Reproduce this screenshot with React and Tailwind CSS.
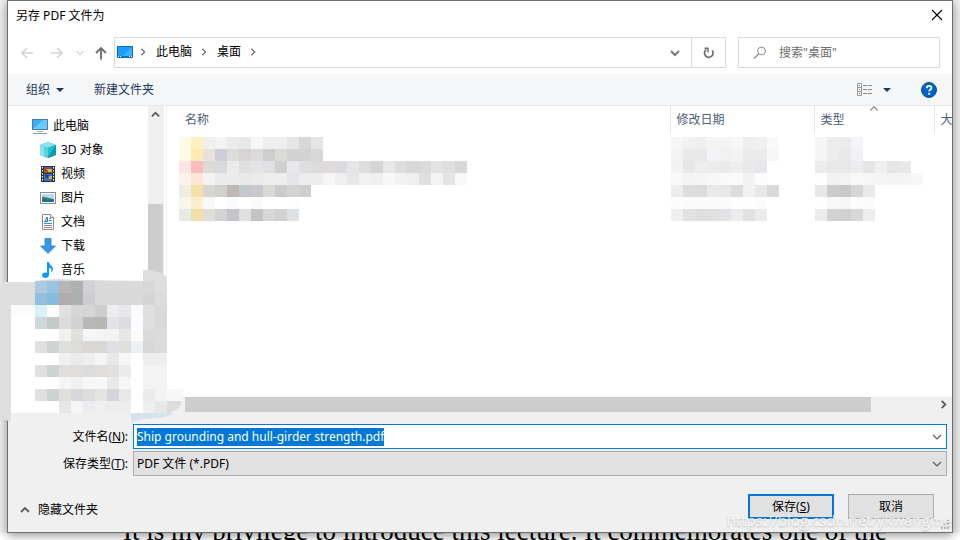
import { useEffect, useRef, useState } from "react";

const NAME_CELLS = [
  "fffae8 fff0c0 f0f0f0 f3f3f3 ecebea e8e8e8 f6f6f5 efefef efefef e8e6e4 d5d7d9 e5e5e5",
  "fffae8 fdebb2 e8e0dc cdcdd6 dcdcdd d8d4d6 dadadb cecdd0 dadad7 d2d2d0 d3d3d3 d7d8da",
  "ffe5e5 fabcba e0d8d6 d6dadf ebebec e0e0e1 e4e4e6 e0e0e2 d0d0d0 e8e9ec dfdfe0 dadcdd e0dadc dcdadf e6e6e6 dddddd d4d6d5 e9e7e8 dddddd d8d8da dadcdb e3e3e3 dfdfdf d7d9d8",
  "fff1ec fde5d8 f4f3f4 eaebeb ebebeb e7eae9 ebebeb eeeeee eeeeee e3e5e8 ededed ededed f7f4f5 efeff1 e7e7e7 f1f1f1 efefef f7f7f7 f1f3f2 f0eef0 dfe1e0 f3f3f3 e4e4e4 f7f8f7",
  "ecede4 f5e2a6 d7d6d5 d0d1cc bfb8b7 c4c7cc cac8cc d8d9d6 cbcbcd d3d3d1 d0ced1",
  "f8f7ea faeecb f8f8fa fffffd fbfaff - fafafa - - fcfdfd",
  "e7eae7 f0dfa8 e1ddd8 d3d3d3 c5c4c9 e0e0df c5c3c4 d7d7d7 d3d0d1 dee1e4",
];

const DATE_CELLS = [
  "f6f6f6 f0f2f2 efefef f3f3f3 f3f3f3 f6f6f6 eeeeee f0f0f0 f8faf9",
  "f3f3f3 e9e9e9 eae9e8 f3f4f8 f1f1f1 f3f3f3 ebebeb eaeaea f7f7f7",
  "f2f2f2 e7e7e5 ededed ececec e8ebe9 eeeeec e9e9ea e6e7ea",
  "f8f8f8 f4f4f4 f5f5f5 f7f7f7 f7faf9 fafafa f2f2f2 fcfcfc",
  "eeebec dddddb dbdbda e8eae9 e6e6e6 dcdcdc f1f1ef e7e7e7 d9d9d9",
  "fcfcfc fafafa fafafa fafafa fafafa fdfdfd fdfdfd fbfbfb",
  "efefef e2e2e3 dfdfdd e0e0e1 e2e3e6 eeeceb dfe1e3 ebebeb",
];

const TYPE_CELLS = [
  "f8f6f5 ebecec ecebea f4f5f8",
  "f5f5f5 ebecec e8e8e6 f1f2f5",
  "eeeceb e7e8e7 e8e8e7 ebecef e5e5e5 efefef e6e6e6 e8e8e8",
  "fdfdfd f2f2f2 f3f3f3 f7f9f8 f6f6f5 f5f5f5 f3f4f4 f4f4f4 f7f7f7",
  "eae8e6 cccccc c8c8c8 d6d6d8 e8e9eb",
  "fefefe f9f9f9 f7f7f7 fcfcfc fafcfb",
  "edebe9 d1d2d2 d0d0cf d8d8da ecedef",
];

const TREE_CELLS = [
  "aacbe2 9ac5e2 b8b5b3 b0b0b0 d0d1d4 dadada dadada dadada dadada d8d8d8",
  "93bfdd 88bcdd b0acaa adb0ae cdced2 d9d9d9 d9d9d9 d9d9d9 d9d9d9 d4d4d4 dcdcdc",
  "daf1f9 fbfcfb e0e0de d4d7d6 d5d5d3 cdcdcf ededed e6e8eb fafbfc dfdfdf d9d9d9",
  "cedada c3c9c7 dcdcda d2d2d2 b8b8b8 b8b7b6 e2e3e6 dfdce0 fcfdff dfdfdf d9d9d9",
  "ffffff ffffff f1eff0 e0e0dd f5f7f6 f3f3f3 f3f3f3 e8e7e7 f9fbfa dadada dbdbdb",
  "dfe1e0 cfd3d1 dfdfdd dddcda d9d8d7 d8d7d5 dfe1e4 e0dfdd eef1f4 d7d7d7 dbdbdb",
  "ffffff ffffff f3eff0 ebeaeb edeef0 f5f5f6 e8e8e6 f6f6f6 ffffff ededed eeeeee",
  "dfe1e0 ced2d0 e0dedc dfdedb dcdcdc dfdedd e2e0de ebebee ffffff f3f3f3 f3f3f3",
  "ffffff ffffff f5f3f4 f0f0f1 f7f7f8 f8f8f8 e9e9e8 f6f6f6 ffffff f3f3f3 f3f3f3",
  "dfe1e0 ced2d0 e0dfdc d8d7da dddde0 e3e3e0 d6d4da e8e8e8 ffffff ebebeb f3f3f3",
  "ffffff ffffff e7e6e4 f5f5f7 ebecee efeff0 eceeec ededed ffffff efefef e8e8e8",
];

const Cells = ({ rows, x = 0, y = 0 }) =>
  rows.map((row, r) =>
    row.split(" ").map((color, c) =>
      color === "-" ? null : (
        <rect
          key={`${r}-${c}`}
          x={x + c * 12}
          y={y + r * 12}
          width="12"
          height="12"
          fill={`#${color}`}
        />
      )
    )
  );

const Mosaic = ({ rows }) => {
  const width = Math.max(...rows.map((row) => row.split(" ").length)) * 12;
  return (
    <svg
      width={width}
      height={rows.length * 12}
      shapeRendering="crispEdges"
      className="block max-w-none"
      aria-hidden="true"
    >
      <Cells rows={rows} />
    </svg>
  );
};

const Chevron = ({ dir = "down", size = 9, stroke = "#5c5c5c", width = 1.6 }) => {
  const d = {
    down: "M1 3l4 4 4-4",
    up: "M1 7l4-4 4 4",
    right: "M3 1l4 4-4 4",
  }[dir];
  return (
    <svg width={size} height={size} viewBox="0 0 10 10" fill="none" className="shrink-0">
      <path d={d} stroke={stroke} strokeWidth={width} />
    </svg>
  );
};

const Arrow = ({ dir, stroke }) => {
  const d = {
    left: "M13 7H2M7 2L2 7l5 5",
    right: "M1 7h11M7 2l5 5-5 5",
    up: "M7 13.500V2M2 7l5-5 5 5",
  }[dir];
  return (
    <svg width="14" height="14" viewBox="0 0 14 14" fill="none">
      <path d={d} stroke={stroke} strokeWidth={dir === "up" ? 1.9 : 1.5} />
    </svg>
  );
};

const Caret = () => (
  <svg width="8" height="4" viewBox="0 0 8 4">
    <path d="M0 0h8L4 4z" fill="#1e395b" />
  </svg>
);

const DesktopIcon = () => (
  <svg width="16" height="12" viewBox="0 0 16 12" className="shrink-0">
    <rect width="16" height="12" fill="#0a6fc2" />
    <rect x="1" y="1" width="14" height="9" fill="#1a9fff" />
    <path d="M15 1v9H6z" fill="#3bb0ff" />
    <path d="M1 10.500h1M3 10.500h1M12 10.500h1M14 10.500h1" stroke="#fff" />
  </svg>
);

const ComputerIcon = () => (
  <svg width="16" height="16" viewBox="0 0 16 16">
    <rect x=".5" y="1.500" width="15" height="10" fill="#35b0fb" stroke="#4d7f9f" />
    <path d="M1 11L11 2h4v9z" fill="#69c8ff" />
    <path d="M5 13.500h6" stroke="#9fb6c6" />
    <path d="M1 15.500h14" stroke="#7e99b4" />
  </svg>
);

const CubeIcon = () => (
  <svg width="16" height="16" viewBox="0 0 16 16">
    <path d="M8 0l8 3v10l-8 3-8-3V3z" fill="#19b5c9" />
    <path d="M0 3l8-3 8 3-8 3z" fill="#8be3ea" />
    <path d="M0 3l8 3v10l-8-3z" fill="#5ccfdb" />
    <path d="M0 3l4 1.500v10L0 13z" fill="#8ce3ec" />
    <path d="M8 6l8-3v10l-8 3z" fill="#0799ad" />
    <path d="M8 6l8-3-8 12z" fill="#1bc0d2" />
  </svg>
);

const VideoIcon = () => (
  <svg width="16" height="16" viewBox="0 0 16 16">
    <rect x="1" y="0" width="14" height="16" fill="#343434" />
    <rect x="4" y="1" width="8" height="6" fill="#3260b4" />
    <rect x="4" y="8" width="8" height="7" fill="#3e72c4" />
    <path d="M4 4l3-3 2 3-2 3H4z" fill="#b44720" />
    <path d="M7 3h5v3H8z" fill="#e7b83a" />
    <path d="M5 9h4l-2 4z" fill="#183a75" />
    <path d="M9 10h3v3H9z" fill="#d5a93a" />
    <path d="M2.500 1v14M13.500 1v14" stroke="#fff" strokeDasharray="1.500 1.500" />
  </svg>
);

const PictureIcon = () => (
  <svg width="16" height="16" viewBox="0 0 16 16">
    <rect x=".5" y="2.500" width="15" height="11" fill="#fff" stroke="#8c8c8c" />
    <rect x="2" y="4" width="12" height="8" fill="#b9dcf3" />
    <path d="M2 7c3-1 5 1 12 2v3H2z" fill="#3d806f" />
    <path d="M2 10c4-1 8 0 12 0v2H2z" fill="#2466a2" />
  </svg>
);

const DocumentIcon = () => (
  <svg width="16" height="16" viewBox="0 0 16 16">
    <path d="M2.500.5h8l3 3v12h-11z" fill="#fff" stroke="#8c8c8c" />
    <path d="M10.500.5v3h3" fill="#eee" stroke="#8c8c8c" />
    <path d="M4 7.500h4M9 4.500h2M9 6.500h3M4 9.500h8" stroke="#3791cb" />
    <path d="M7 3L5 8M7 3l1 5" stroke="#2a6ea5" />
    <path d="M4 11.500h8M4 13.500h8" stroke="#888" />
  </svg>
);

const DownloadIcon = () => (
  <svg width="16" height="16" viewBox="0 0 16 16">
    <path d="M5 .5h6V8h4.500L8 15.500.5 8H5z" fill="#3797e8" stroke="#2e81cb" strokeWidth=".8" />
  </svg>
);

const MusicIcon = () => (
  <svg width="16" height="16" viewBox="0 0 16 16">
    <path
      d="M7 0h2c0 3 4 4 4 7 0 1-1 3-2 3 1-3 0-4-2-4v7c0 4-7 4-7 0 0-2 3-3 5-2z"
      fill="#0a9bf5"
    />
  </svg>
);

const folders = [
  { name: "3D 对象", Icon: CubeIcon },
  { name: "视频", Icon: VideoIcon },
  { name: "图片", Icon: PictureIcon },
  { name: "文档", Icon: DocumentIcon },
  { name: "下载", Icon: DownloadIcon },
  { name: "音乐", Icon: MusicIcon },
];

const TitleBar = () => (
  <div className="flex h-9 items-start justify-between pl-2 pr-[5px]">
    <h1 className="pt-1.5">另存 PDF 文件为</h1>
    <button type="button" aria-label="关闭" className="p-1 pt-2">
      <svg width="12" height="12" viewBox="0 0 12 12">
        <path d="M1 1l10 10M11 1L1 11" stroke="#000" strokeWidth="1.1" />
      </svg>
    </button>
  </div>
);

const AddressBar = () => (
  <div className="flex items-center pb-1.5 pl-3 pr-3">
    <div className="flex w-[94px] shrink-0 items-center">
      <button type="button" aria-label="后退">
        <Arrow dir="left" stroke="#d2d2d2" />
      </button>
      <button type="button" aria-label="前进" className="ml-4">
        <Arrow dir="right" stroke="#d2d2d2" />
      </button>
      <button type="button" aria-label="最近浏览的位置" className="ml-3">
        <Chevron size={8} stroke="#d2d2d2" />
      </button>
      <button type="button" aria-label="上移" className="ml-2.5">
        <Arrow dir="up" stroke="#6f6f6f" />
      </button>
    </div>
    <div className="flex h-[31px] flex-1 border border-[#d9d9d9]">
      <div className="flex flex-1 items-center pb-0.5 pl-0.5">
        <DesktopIcon />
        <span className="ml-1.5 flex">
          <Chevron dir="right" size={8} stroke="#6f6f6f" />
        </span>
        <button type="button" className="ml-[9px]">
          此电脑
        </button>
        <span className="ml-2 flex">
          <Chevron dir="right" size={8} stroke="#6f6f6f" />
        </span>
        <button type="button" className="ml-[9px]">
          桌面
        </button>
        <span className="ml-2 flex">
          <Chevron dir="right" size={8} stroke="#6f6f6f" />
        </span>
      </div>
      <button type="button" aria-label="以前的位置" className="px-[11px]">
        <Chevron size={10} stroke="#777" width={2} />
      </button>
      <button
        type="button"
        aria-label="刷新"
        className="flex w-[34px] items-center justify-center border-l border-[#d9d9d9]"
      >
        <svg width="12" height="12" viewBox="0 0 12 12" fill="none">
          <path d="M3.200 2.600A4.300 4.300 0 1 0 9.200 3.400" stroke="#6f6f6f" strokeWidth="1.700" />
          <path d="M1.500 1.200H5v4" stroke="#6f6f6f" strokeWidth="1.500" />
        </svg>
      </button>
    </div>
    <label className="ml-3 flex h-[31px] w-[202px] items-center border border-[#d9d9d9] pl-3.5">
      <svg width="14" height="14" viewBox="0 0 14 14" fill="none" className="shrink-0">
        <circle cx="8.500" cy="5" r="3.900" stroke="#8a8a8a" />
        <path d="M5.800 7.800L1 12.500" stroke="#8a8a8a" strokeWidth="1.200" />
      </svg>
      <input
        type="text"
        aria-label="搜索"
        placeholder={'搜索"桌面"'}
        className="ml-3 w-full min-w-0 outline-none placeholder:text-[#6d6d6d]"
      />
    </label>
  </div>
);

const Toolbar = () => (
  <div className="flex h-8 items-center border-b border-[#e6e8ea] bg-[#f5f6f7] pl-[18px] pr-[15px] text-[#1e395b]">
    <button type="button" className="flex items-center gap-1.5">
      组织
      <Caret />
    </button>
    <button type="button" className="ml-[30px]">
      新建文件夹
    </button>
    <button type="button" aria-label="更改视图" className="ml-auto flex items-center gap-2.5">
      <svg width="16" height="13" viewBox="0 0 16 13" fill="none">
        <path d="M.5.5h4v12h-4zM.5 4.500h4M.5 8.500h4" stroke="#9a9a9a" />
        <path d="M2 2.500h1M2 6.500h1" stroke="#4a8ac9" />
        <path d="M2 10.500h1" stroke="#d33" />
        <path d="M6 2.500h10M6 6.500h10M6 10.500h10" stroke="#8a8a8a" strokeDasharray="4 1" />
      </svg>
      <Caret />
    </button>
    <button type="button" aria-label="帮助" className="ml-[30px]">
      <svg width="16" height="16" viewBox="0 0 16 16" fill="none">
        <circle cx="8" cy="8" r="7.500" fill="#0064c8" stroke="#0b4c8f" />
        <path d="M5.700 6.200c0-3.300 4.800-3 4.800-.3 0 1.600-2.300 1.700-2.300 3.600" stroke="#fff" strokeWidth="1.700" />
        <circle cx="8.200" cy="11.800" r="1.100" fill="#fff" />
      </svg>
    </button>
  </div>
);

const FolderTree = () => (
  <div className="flex w-[159px] shrink-0 border-r border-[#f0f0f0]">
    <nav className="flex-1 pt-2">
      <a href="#computer" className="flex h-6 items-center gap-[5px] pl-6">
        <ComputerIcon />
        此电脑
      </a>
      {folders.map(({ name, Icon }) => (
        <a key={name} href={`#${name}`} className="flex h-6 items-center gap-[5px] pl-8">
          <Icon />
          {name}
        </a>
      ))}
    </nav>
    <div className="mr-0.5 flex w-4 flex-col bg-[#f0f0f0] pr-px pt-1">
      <div className="flex justify-center">
        <Chevron dir="up" size={9} width={2} />
      </div>
      <div className="mt-[85px] w-full flex-1 bg-[#cdcdcd]"></div>
    </div>
  </div>
);

const FileList = () => (
  <div className="flex min-w-0 flex-1 flex-col overflow-hidden">
    <table className="w-full table-fixed border-collapse text-left">
      <thead className="text-[#4c607a]">
        <tr className="h-[27px]">
          <th className="pl-[18px] font-normal">名称</th>
          <th className="w-36 border-l border-[#e5e5e5] pl-1.5 font-normal">修改日期</th>
          <th className="relative w-[120px] border-l border-[#e5e5e5] pl-1.5 font-normal">
            类型
            <span className="absolute -top-0.5 left-1/2 flex -translate-x-1/2">
              <Chevron dir="up" size={9} stroke="#777" width={1.2} />
            </span>
          </th>
          <th className="w-[18px] overflow-hidden whitespace-nowrap border-l border-[#e5e5e5] pl-1.5 font-normal">
            大
          </th>
        </tr>
      </thead>
      <tbody>
        <tr className="align-top">
          <td className="pl-3 pt-1">
            <Mosaic rows={NAME_CELLS} />
          </td>
          <td className="pl-px pt-1">
            <Mosaic rows={DATE_CELLS} />
          </td>
          <td className="pl-px pt-1">
            <Mosaic rows={TYPE_CELLS} />
          </td>
          <td></td>
        </tr>
      </tbody>
    </table>
    <div className="mt-auto flex h-4 items-start bg-[#f0f0f0] pl-[18px] pr-1">
      <div className="h-[15px] flex-1 bg-[#cdcdcd]"></div>
      <div className="flex h-[15px] w-[77px] items-center justify-end">
        <Chevron dir="right" size={9} width={2} />
      </div>
    </div>
  </div>
);

const SaveForm = () => {
  const [fileName, setFileName] = useState("Ship grounding and hull-girder strength.pdf");
  const nameRef = useRef(null);

  useEffect(() => {
    nameRef.current.focus();
    nameRef.current.select();
  }, []);

  return (
    <form className="pb-[13px] pt-[11px]" onSubmit={(e) => e.preventDefault()}>
      <div className="grid grid-cols-[120px_1fr] items-center gap-x-[5px] gap-y-0.5 pr-[5px]">
        <label htmlFor="fileName" className="text-right">
          文件名(<u>N</u>):
        </label>
        <div className="flex h-[25px] items-center border border-[#0078d7] bg-white pl-[3px] pr-1">
          <input
            id="fileName"
            ref={nameRef}
            type="text"
            value={fileName}
            onChange={(e) => setFileName(e.target.value)}
            className="min-w-0 flex-1 outline-none selection:bg-[#0078d7] selection:text-white"
          />
          <Chevron size={10} width={1.2} />
        </div>
        <label htmlFor="fileType" className="text-right">
          保存类型(<u>T</u>):
        </label>
        <div className="relative">
          <select
            id="fileType"
            className="block h-[25px] w-full appearance-none border border-[#adadad] bg-[#e1e1e1] pl-[3px] outline-none"
          >
            <option>PDF 文件 (*.PDF)</option>
          </select>
          <span className="pointer-events-none absolute inset-y-0 right-[5px] flex items-center">
            <Chevron size={10} width={1.2} />
          </span>
        </div>
      </div>
      <div className="mt-[18px] flex items-center pl-3 pr-[18px]">
        <button type="button" className="mr-auto flex items-center gap-2 pt-1.5">
          <Chevron dir="up" size={10} width={1.8} />
          隐藏文件夹
        </button>
        <button type="submit" className="h-[25px] w-[86px] border-2 border-[#0078d7] bg-[#e1e1e1]">
          保存(<u>S</u>)
        </button>
        <button type="button" className="ml-3.5 h-[25px] w-[86px] border border-[#adadad] bg-[#e1e1e1]">
          取消
        </button>
      </div>
    </form>
  );
};

const TreeCover = () => (
  <svg
    width="184"
    height="152"
    viewBox="0 270 184 152"
    className="pointer-events-none absolute left-0 top-[270px]"
    aria-hidden="true"
  >
    <path d="M11 305h132v108H11z" fill="#fff" />
    <path d="M0 282h35v23H11v116c-5 0-8-2-11-2z" fill="#dedede" />
    <path d="M35 281c12-2 24-2 48-1l60 1v24H35z" fill="#dadada" />
    <path d="M143 270c11-1 18 2 24 7v16h-24z" fill="#dedede" />
    <path d="M131 413h43c-9 6-20 5-29 6-6 0-9 2-14 4z" fill="#d5e3ed" />
    <path d="M167 389h16v9c-1 6-5 12-9 15h-7z" fill="#f7f7f7" />
    <path d="M167 401h15c-2 7-6 11-15 12z" fill="#dcdcdc" />
    <g shapeRendering="crispEdges">
      <Cells rows={TREE_CELLS} x={35} y={281} />
      <path d="M11 305h24v11H11z" fill="#fbfbfb" />
    </g>
  </svg>
);

const App = () => {
  return (
    <div className="relative flex min-h-screen flex-col overflow-hidden bg-[#f1f1f1] font-['Noto_Sans','Noto_Sans_CJK_SC',sans-serif] text-xs/[18px] text-black">
      <main className="relative z-10 mx-[7px] flex flex-1 flex-col border border-[#6f6f6f] bg-[#f0f0f0] shadow-[0_2px_10px_rgba(0,0,0,0.45)]">
        <div className="bg-white">
          <TitleBar />
          <AddressBar />
          <Toolbar />
        </div>
        <div className="flex flex-1 bg-white">
          <FolderTree />
          <FileList />
        </div>
        <SaveForm />
        <svg
          width="10"
          height="10"
          viewBox="0 0 10 10"
          className="absolute bottom-0.5 right-0.5"
          aria-hidden="true"
        >
          <path
            d="M7 1h2M4 4h2M7 4h2M1 8h2M4 8h2M7 8h2"
            stroke="#bdbdbd"
            strokeWidth="2"
          />
        </svg>
      </main>
      <div className="flex h-[7px] items-end overflow-hidden bg-white pl-[123px]">
        <p className="-mb-[7px] whitespace-nowrap font-['Liberation_Serif',serif] text-[27px]/8">
          It is my privilege to introduce this lecture. It commemorates one of the
        </p>
      </div>
      <div className="absolute left-0 top-0 z-20">
        <TreeCover />
      </div>
      <p className="pointer-events-none absolute bottom-2 right-2 z-20 font-['Open_Sans',sans-serif] text-[15px]/6 text-white/80 [text-shadow:0_1px_2px_rgba(0,0,0,0.25)]">
        https://blog.csdn.net/ykwangme
      </p>
    </div>
  );
};

export default App;
